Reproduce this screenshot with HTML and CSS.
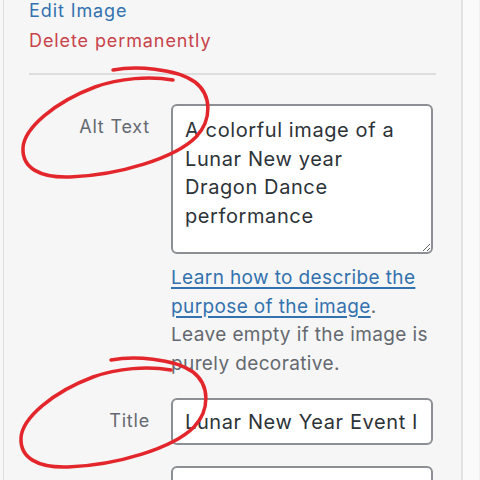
FILE: index.html
```html
<!DOCTYPE html>
<html lang="en">
<head>
<meta charset="utf-8">
<title>Attachment details</title>
<link rel="stylesheet" href="styles.css">
</head>
<body>
<div class="frame">
  <div class="gutter"></div>
  <section class="panel">
    <div class="actions">
      <a class="link edit" href="#">Edit Image</a>
      <a class="link delete" href="#">Delete permanently</a>
    </div>
    <hr class="sep">
    <div class="row">
      <label class="label" for="alt">Alt Text</label>
      <div class="field">
        <textarea id="alt" class="textarea">A colorful image of a Lunar New year Dragon Dance performance</textarea>
        <p class="help"><a class="help-link" href="#">Learn how to describe the<br>purpose of the image</a>.<br>Leave empty if the image is<br>purely decorative.</p>
      </div>
    </div>
    <div class="row row-title">
      <label class="label" for="title">Title</label>
      <div class="field">
        <input id="title" class="input" type="text" value="Lunar New Year Event Image">
      </div>
    </div>
    <div class="row row-caption">
      <label class="label label-caption" for="caption">Caption</label>
      <div class="field">
        <div class="input input-tall"></div>
      </div>
    </div>
  </section>
  <div class="side"></div>
  <svg class="annot" width="480" height="480" viewBox="0 0 480 480" aria-hidden="true">
    <path class="ring" d="M113,70 C135,66 175,68 195,82 C212,95 212,120 196,137 C175,158 120,175 70,177 C40,178 22,168 23,148 C24,128 55,102 95,87 C120,78 150,76 173,80"/>
    <path class="ring" transform="translate(-2,290)" d="M113,70 C135,66 175,68 195,82 C212,95 212,120 196,137 C175,158 120,175 70,177 C40,178 22,168 23,148 C24,128 55,102 95,87 C120,78 150,76 173,80"/>
  </svg>
</div>
</body>
</html>
```

FILE: styles.css
```css
* { box-sizing: border-box; }
html, body { margin: 0; padding: 0; }
body {
  width: 480px;
  height: 480px;
  overflow: hidden;
  background: #f9f9f9;
  font-family: Inter, "Noto Sans", "Liberation Sans", sans-serif;
}
.frame {
  position: relative;
  display: flex;
  height: 480px;
}
.gutter {
  width: 3px;
  background: #f7f7f7;
}
.panel {
  width: 460px;
  height: 480px;
  overflow: hidden;
  background: #f6f6f6;
  border-left: 1px solid #dedede;
  border-right: 2px solid #e2e2e2;
  padding-left: 25px;
}
.side {
  flex: 1;
  background: #fafafa;
  border-right: 1px solid #f1f1f1;
}
.actions {
  display: flex;
  flex-direction: column;
  margin-top: -4px;
  font-size: 18px;
  line-height: 30px;
  letter-spacing: 0.05em;
}
.link { text-decoration: none; }
.edit { color: #3372ae; }
.delete { color: #c9434a; }
.sep {
  width: 407px;
  margin: 17px 0 0 0;
  border: 0;
  height: 2px;
  background: #dddddd;
}
.row {
  display: grid;
  grid-template-columns: 121px 262px;
  column-gap: 21px;
  margin-top: 29px;
}
.row-title { margin-top: 20px; }
.row-caption { margin-top: 21px; }
.label {
  text-align: right;
  font-size: 18px;
  line-height: 28px;
  padding-top: 9px;
  color: #646970;
  letter-spacing: 0.045em;
}
.label-caption { padding-top: 9px; }
.textarea {
  display: block;
  width: 262px;
  height: 150px;
  margin: 0;
  padding: 10px 18px 10px 12px;
  border: 2px solid #8c8f94;
  border-radius: 6px;
  background: #fff;
  color: #2c3338;
  font-family: inherit;
  font-size: 20px;
  line-height: 28.6px;
  letter-spacing: 0.03em;
  resize: vertical;
  overflow: hidden;
}
.help {
  margin: 10px 0 0 0;
  font-size: 19px;
  line-height: 28.6px;
  color: #646970;
  white-space: nowrap;
  letter-spacing: 0.02em;
}
.help-link {
  color: #3372ae;
  text-decoration: underline;
  text-underline-offset: 3px;
  text-decoration-thickness: 2px;
}
.input {
  display: block;
  width: 262px;
  height: 47px;
  margin: 0;
  padding: 0 12px;
  border: 2px solid #8c8f94;
  border-radius: 6px;
  background: #fff;
  color: #2c3338;
  font-family: inherit;
  font-size: 20px;
  letter-spacing: 0.03em;
}
.input-tall { height: 60px; }
.annot {
  position: absolute;
  left: 0;
  top: 0;
  pointer-events: none;
}
.ring {
  fill: none;
  stroke: #e3262b;
  stroke-width: 3.5;
  stroke-linecap: round;
  stroke-linejoin: round;
}
```
